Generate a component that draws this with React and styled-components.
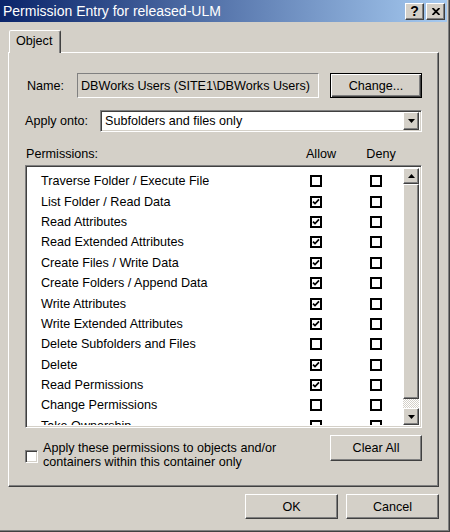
import styled, { createGlobalStyle, css } from "styled-components";

const GlobalStyle = createGlobalStyle`
  html, body {
    margin: 0;
    padding: 0;
    background: #d4d0c8;
  }
  body {
    font-family: "Liberation Sans", Arial, sans-serif;
    font-size: 12.6px;
    color: #000;
  }
  * {
    box-sizing: border-box;
  }
`;

const raised = css`
  background: #d4d0c8;
  border: 1px solid;
  border-color: #fff #404040 #404040 #fff;
  box-shadow: inset -1px -1px #808080, inset 1px 1px #d4d0c8;
`;

const sunken = css`
  border: 1px solid;
  border-color: #808080 #fff #fff #808080;
  box-shadow: inset 1px 1px #404040, inset -1px -1px #d4d0c8;
`;

const perms = [
  ["Traverse Folder / Execute File", false],
  ["List Folder / Read Data", true],
  ["Read Attributes", true],
  ["Read Extended Attributes", true],
  ["Create Files / Write Data", true],
  ["Create Folders / Append Data", true],
  ["Write Attributes", true],
  ["Write Extended Attributes", true],
  ["Delete Subfolders and Files", false],
  ["Delete", true],
  ["Read Permissions", true],
  ["Change Permissions", false],
  ["Take Ownership", false],
];

function Arrow({ up }) {
  return (
    <svg width="7" height="4" viewBox="0 0 7 4">
      <polygon points={up ? "0,4 7,4 3.5,0" : "0,0 7,0 3.5,4"} fill="#000" />
    </svg>
  );
}

function ListCheck({ checked }) {
  return (
    <Box>
      {checked && (
        <svg width="8" height="8" viewBox="0 0 8 8">
          <path d="M1 3.6 L3 5.6 L7 1.4" stroke="#000" strokeWidth="1.7" fill="none" />
        </svg>
      )}
    </Box>
  );
}

export default function App() {
  return (
    <>
      <GlobalStyle />
      <Window>
        <TitleBar>
          <Title>Permission Entry for released-ULM</Title>
          <Caps>
            <CapButton>?</CapButton>
            <CapButton>
              <svg width="8" height="7" viewBox="0 0 8 7">
                <path d="M0.5 0 L7.5 7 M7.5 0 L0.5 7" stroke="#000" strokeWidth="1.8" />
              </svg>
            </CapButton>
          </Caps>
        </TitleBar>

        <Content>
          <TabStrip>
            <Tab>Object</Tab>
          </TabStrip>

          <Panel>
            <NameRow>
              <NameLabel>Name:</NameLabel>
              <NameField>DBWorks Users (SITE1\DBWorks Users)</NameField>
              <Button $default $w={92}>Change...</Button>
            </NameRow>

            <ApplyRow>
              <ApplyLabel>Apply onto:</ApplyLabel>
              <Combo>
                <ComboText>Subfolders and files only</ComboText>
                <ComboButton>
                  <Arrow />
                </ComboButton>
              </Combo>
            </ApplyRow>

            <ListHeader>
              <span>Permissions:</span>
              <HeadCol>Allow</HeadCol>
              <HeadCol>Deny</HeadCol>
            </ListHeader>

            <ListBox>
              <Rows>
                {perms.map(([label, allow]) => (
                  <Row key={label}>
                    <span>{label}</span>
                    <Cell>
                      <ListCheck checked={allow} />
                    </Cell>
                    <Cell>
                      <ListCheck checked={false} />
                    </Cell>
                  </Row>
                ))}
              </Rows>
              <ScrollBar>
                <ScrollButton $h={16}>
                  <Arrow up />
                </ScrollButton>
                <Thumb />
                <Track />
                <ScrollButton $h={17}>
                  <Arrow />
                </ScrollButton>
              </ScrollBar>
            </ListBox>

            <BottomRow>
              <ApplyCheck>
                <CheckBox3D />
                <CheckText>
                  Apply these permissions to objects and/or
                  <br />
                  containers within this container only
                </CheckText>
              </ApplyCheck>
              <Button $w={92} $h={26}>Clear All</Button>
            </BottomRow>
          </Panel>

          <Footer>
            <Button $w={93}>OK</Button>
            <Button $w={93}>Cancel</Button>
          </Footer>
        </Content>
      </Window>
    </>
  );
}

const Window = styled.div`
  width: 450px;
  height: 532px;
  background: #d4d0c8;
  padding: 0 3px 2px 0;
  box-shadow: inset -1px -1px #404040, inset -2px -2px #808080;
`;

const TitleBar = styled.div`
  height: 22px;
  display: flex;
  align-items: center;
  justify-content: space-between;
  padding: 0 2px 0 3px;
  background: linear-gradient(to right, #0a246a, #a6caf0);
`;

const Title = styled.div`
  color: #fff;
  font-size: 14px;
  white-space: nowrap;
`;

const Caps = styled.div`
  display: flex;
  gap: 2px;
`;

const CapButton = styled.div`
  ${raised};
  width: 19px;
  height: 17px;
  display: flex;
  align-items: center;
  justify-content: center;
  font-weight: bold;
  font-size: 14px;
  line-height: 1;
`;

const Content = styled.div`
  padding: 8px 8px 0 8px;
`;

const TabStrip = styled.div`
  display: flex;
  padding-left: 1px;
  height: 22px;
`;

const Tab = styled.div`
  position: relative;
  z-index: 1;
  width: 52px;
  height: 23px;
  background: #d4d0c8;
  border: 1px solid;
  border-bottom: none;
  border-color: #fff #404040 transparent #fff;
  border-radius: 2px 2px 0 0;
  box-shadow: inset -1px 0 #808080;
  padding: 3px 0 0 6px;
`;

const Panel = styled.div`
  height: 435px;
  border: 1px solid;
  border-color: #fff #404040 #404040 #fff;
  box-shadow: inset -1px -1px #808080;
  padding: 20px 16px 0 16px;
`;

const NameRow = styled.div`
  display: flex;
  align-items: center;
  height: 25px;
`;

const NameLabel = styled.div`
  width: 52px;
  padding-left: 2px;
`;

const NameField = styled.div`
  width: 242px;
  height: 25px;
  margin-right: 11px;
  border: 1px solid;
  border-color: #808080 #fff #fff #808080;
  display: flex;
  align-items: center;
  padding-left: 3px;
  white-space: nowrap;
`;

const Button = styled.div`
  ${raised};
  width: ${(p) => p.$w}px;
  height: ${(p) => p.$h || 25}px;
  display: flex;
  align-items: center;
  justify-content: center;
  ${(p) =>
    p.$default &&
    css`
      border: 1px solid #000;
      box-shadow: inset 1px 1px #fff, inset -1px -1px #404040, inset -2px -2px #808080;
    `}
`;

const ApplyRow = styled.div`
  display: flex;
  align-items: center;
  height: 22px;
  margin-top: 12px;
`;

const ApplyLabel = styled.div`
  width: 75px;
`;

const Combo = styled.div`
  ${sunken};
  flex: 1;
  height: 22px;
  background: #fff;
  display: flex;
  align-items: center;
  padding: 2px;
`;

const ComboText = styled.div`
  flex: 1;
  padding-left: 2px;
`;

const ComboButton = styled.div`
  ${raised};
  width: 16px;
  height: 18px;
  display: flex;
  align-items: center;
  justify-content: center;
`;

const ListHeader = styled.div`
  display: grid;
  grid-template-columns: 1fr 40px 40px;
  column-gap: 20px;
  align-items: center;
  height: 14px;
  margin-top: 15px;
  padding: 0 21px 0 1px;
`;

const HeadCol = styled.span`
  text-align: center;
  white-space: nowrap;
`;

const ListBox = styled.div`
  ${sunken};
  margin-top: 4px;
  height: 263px;
  background: #fff;
  display: flex;
  padding: 2px;
`;

const Rows = styled.div`
  flex: 1;
  overflow: hidden;
  padding-top: 3px;
`;

const Row = styled.div`
  display: grid;
  grid-template-columns: 1fr 40px 40px;
  column-gap: 20px;
  align-items: center;
  height: 20.4px;
  padding: 0 7px 0 13px;
  white-space: nowrap;
`;

const Cell = styled.div`
  display: flex;
  justify-content: center;
`;

const Box = styled.div`
  width: 12px;
  height: 12px;
  border: 2px solid #000;
  background: #fff;
  display: flex;
  align-items: center;
  justify-content: center;
`;

const ScrollBar = styled.div`
  width: 16px;
  display: flex;
  flex-direction: column;
`;

const ScrollButton = styled.div`
  ${raised};
  height: ${(p) => p.$h}px;
  display: flex;
  align-items: center;
  justify-content: center;
`;

const Thumb = styled.div`
  ${raised};
  height: 215px;
`;

const Track = styled.div`
  flex: 1;
  background: repeating-conic-gradient(#fff 0 25%, #d4d0c8 0 50%) 0 0 / 2px 2px;
`;

const BottomRow = styled.div`
  display: flex;
  justify-content: space-between;
  align-items: flex-start;
  margin-top: 7px;
`;

const ApplyCheck = styled.div`
  display: flex;
  align-items: center;
  gap: 5px;
  margin-top: 6px;
`;

const CheckBox3D = styled.div`
  ${sunken};
  width: 13px;
  height: 13px;
  background: #fff;
  flex-shrink: 0;
  margin-top: 2px;
`;

const CheckText = styled.div`
  line-height: 14px;
`;

const Footer = styled.div`
  display: flex;
  justify-content: flex-end;
  gap: 8px;
  margin-top: 7px;
`;
